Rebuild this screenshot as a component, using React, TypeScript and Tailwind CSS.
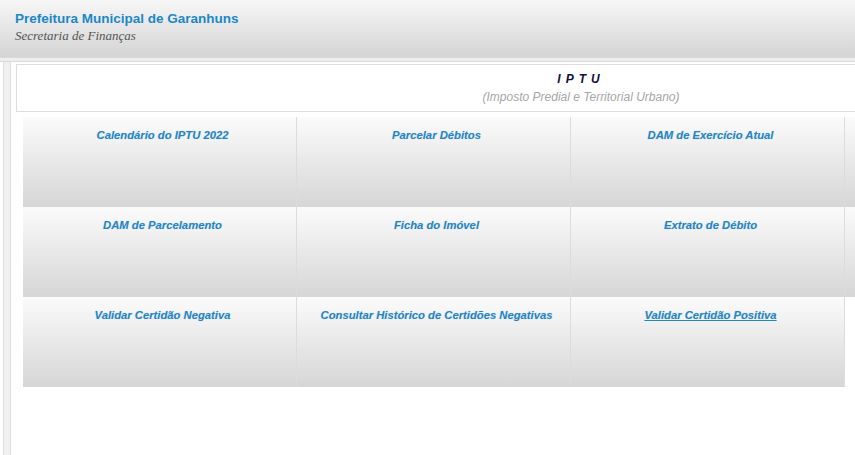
import React from 'react';

const rows: { label: string; active?: boolean }[][] = [
  [{ label: 'Calendário do IPTU 2022' }, { label: 'Parcelar Débitos' }, { label: 'DAM de Exercício Atual' }, { label: '' }],
  [{ label: 'DAM de Parcelamento' }, { label: 'Ficha do Imóvel' }, { label: 'Extrato de Débito' }, { label: '' }],
  [
    { label: 'Validar Certidão Negativa' },
    { label: 'Consultar Histórico de Certidões Negativas' },
    { label: 'Validar Certidão Positiva', active: true },
  ],
];

function MenuCell({ label, active }: { label: string; active?: boolean }) {
  return (
    <div className="h-[90px] w-[274px] shrink-0 border-r border-[#dcdcdc] bg-gradient-to-b from-[#fbfbfb] to-[#d6d6d6] pl-[6px] pt-[5px] text-center">
      {label && (
        <a
          href="#"
          className={
            'text-[11.25px] font-bold italic text-[#2585c4] [text-shadow:0_0_1px_rgba(37,133,196,0.25)] ' +
            (active ? 'underline' : 'no-underline')
          }
        >
          {label}
        </a>
      )}
    </div>
  );
}

export default function App() {
  return (
    <div className="h-[455px] w-[855px] overflow-hidden bg-white font-['Liberation_Sans',Arial,sans-serif]">
      {/* Header */}
      <header className="h-[57px] bg-gradient-to-b from-[#f7f7f7] to-[#d4d4d4] pl-[15px] pt-[10px]">
        <h1 className="text-[13.5px] font-bold leading-[18px] text-[#1b87c9]">Prefeitura Municipal de Garanhuns</h1>
        <p className="font-['Liberation_Serif',serif] text-[13px] italic leading-[15px] text-[#555]">Secretaria de Finanças</p>
      </header>
      <div className="h-[5px] border-t border-b border-[#d9d9d9] bg-[#eeeeee]" />

      <div className="flex">
        {/* Sidebar */}
        <aside className="ml-[3px] h-[400px] w-[8px] shrink-0 border-x border-[#dedede] bg-[#f0f0f0]" />

        {/* Content */}
        <main className="ml-[5px] w-[1130px] shrink-0 pt-[2px]">
          <div className="h-[48px] border border-[#dddddd] bg-white pt-[6px] text-center">
            <div className="text-[12px] font-bold italic leading-[16px] tracking-[5px] text-[#101040]">IPTU</div>
            <div className="mt-[2px] text-[12px] italic leading-[16px] text-[#a6a6a6]">(Imposto Predial e Territorial Urbano)</div>
          </div>

          <div className="ml-[7px] mt-[5px] flex flex-col">
            {rows.map((row, i) => (
              <div key={i} className="flex">
                {row.map((c, j) => (
                  <MenuCell key={j} label={c.label} active={c.active} />
                ))}
              </div>
            ))}
          </div>
        </main>
      </div>
    </div>
  );
}
